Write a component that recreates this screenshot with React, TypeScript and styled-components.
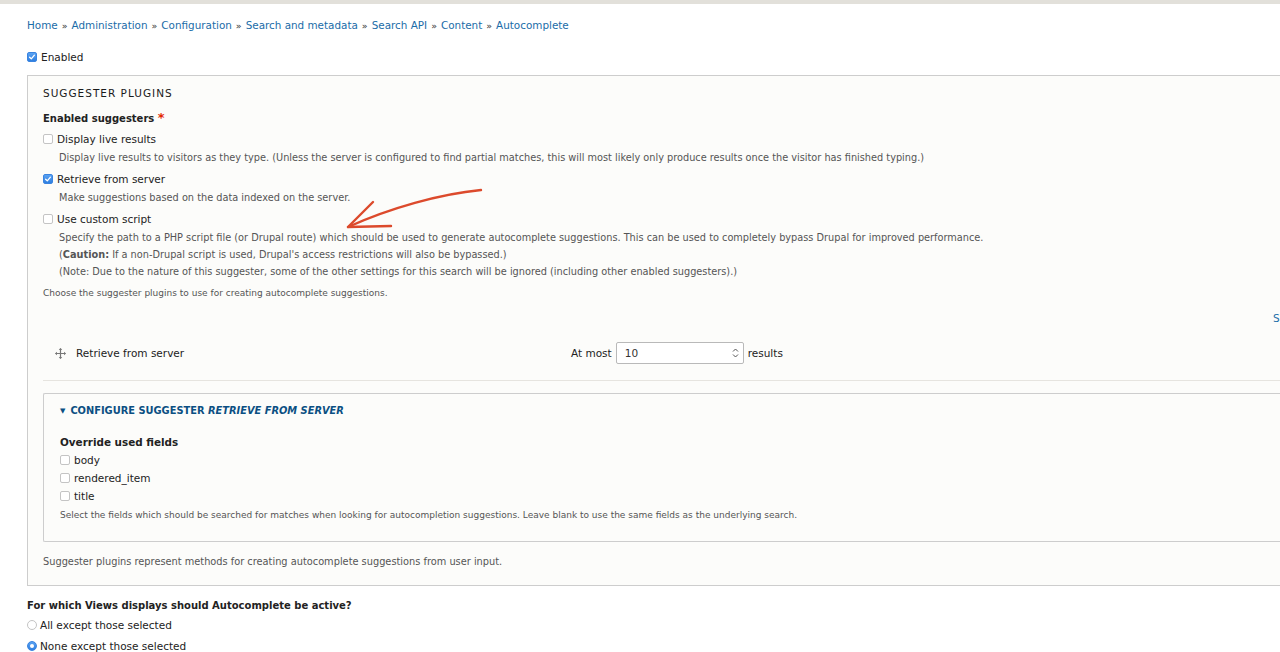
import styled, { createGlobalStyle } from "styled-components"

const GlobalStyle = createGlobalStyle`
    html, body {
        margin: 0;
        padding: 0;
        background: #fff;
        overflow: hidden;
    }
    body {
        font-family: "DejaVu Sans", "Liberation Sans", sans-serif;
        color: #222;
    }
`

const TopBar = styled.div`
    height: 4px;
    background: #e2e0da;
`

const Page = styled.div`
    position: relative;
    width: 1353px;
    padding: 13px 0 0 27px;
`

const Breadcrumb = styled.nav`
    font-size: 10.4px;
    line-height: 16px;
    color: #333;
    a {
        color: #1a6ca8;
        text-decoration: none;
    }
`

const Sep = styled.span`
    color: #333;
    margin: 0 4px;
    font-size: 9.5px;
`

const CheckRow = styled.label<{ $size?: string }>`
    display: flex;
    align-items: center;
    gap: 4px;
    font-size: ${props => props.$size || "10.5px"};
    line-height: 18px;
    color: #222;
`

const EnabledRow = styled(CheckRow)`
    margin-top: 14px;
`

const Box = styled.span<{ checked?: boolean; round?: boolean }>`
    display: inline-flex;
    align-items: center;
    justify-content: center;
    width: 10px;
    height: 10px;
    box-sizing: border-box;
    flex-shrink: 0;
    border-radius: ${props => props.round ? "50%" : "2px"};
    border: 1px solid ${props => props.checked ? "#3a84e0" : "#c4c4c4"};
    background: ${props => props.checked ? "linear-gradient(#5aa2f2, #2f7fe0)" : "#fff"};
`

const Dot = styled.span`
    width: 4px;
    height: 4px;
    border-radius: 50%;
    background: #fff;
`

const Fieldset = styled.section`
    margin-top: 9px;
    border: 1px solid #cdcdcd;
    border-right: none;
    background: #fcfcfa;
    padding: 9px 0 15px 15px;
`

const Legend = styled.h2`
    margin: 0;
    font-size: 10.5px;
    line-height: 16px;
    font-weight: normal;
    letter-spacing: 1px;
    text-transform: uppercase;
    color: #1a1a1a;
`

const GroupLabel = styled.div`
    margin-top: 9px;
    font-size: 10px;
    line-height: 16px;
    font-weight: bold;
    color: #222;
    span {
        color: #e32700;
        font-size: 13px;
    }
`

const Option = styled.div<{ $first?: boolean }>`
    margin-top: ${props => props.$first ? "3px" : "4px"};
`

const OptionDesc = styled.div`
    padding-left: 16px;
    font-size: 9.75px;
    line-height: 17px;
    color: #555;
    &:first-of-type {
        margin-top: 1px;
    }
`

const HelpText = styled.div<{ $top?: string; $size?: string }>`
    margin-top: ${props => props.$top || "5px"};
    font-size: ${props => props.$size || "9px"};
    line-height: 16px;
    color: #555;
`

const WeightLink = styled.div`
    margin-top: 9px;
    text-align: right;
    padding-right: 12px;
    font-size: 10.5px;
    line-height: 16px;
    color: #1a6ca8;
`

const DragRow = styled.div`
    display: grid;
    grid-template-columns: 516px auto;
    align-items: center;
    height: 54px;
    border-bottom: 1px solid #e6e4df;
    padding-left: 12px;
    font-size: 10.5px;
    color: #222;
`

const DragName = styled.div`
    display: flex;
    align-items: center;
    gap: 10px;
`

const Limit = styled.div`
    display: flex;
    align-items: center;
    gap: 4px;
`

const NumberBox = styled.div`
    display: flex;
    align-items: center;
    justify-content: space-between;
    box-sizing: border-box;
    width: 128px;
    height: 22px;
    padding: 0 4px 0 8px;
    border: 1px solid #b9b9b9;
    border-radius: 2px;
    background: #fff;
    font-size: 10.5px;
    color: #333;
`

const Details = styled.div`
    margin-top: 12px;
    border: 1px solid #cdcdcd;
    border-right: none;
    border-radius: 2px 0 0 2px;
    padding: 9px 0 18px 16px;
`

const Summary = styled.div`
    display: flex;
    align-items: center;
    font-size: 9.85px;
    line-height: 16px;
    font-weight: bold;
    text-transform: uppercase;
    color: #0b4f82;
    white-space: pre;
    em {
        font-style: italic;
    }
`

const Caret = styled.span`
    font-size: 7px;
    margin-right: 5px;
`

const SubLabel = styled.div`
    margin-top: 15px;
    font-size: 10.4px;
    line-height: 16px;
    font-weight: bold;
    color: #222;
`

const FieldList = styled.div`
    margin-top: 1px;
`

const Question = styled.div`
    margin-top: 12px;
    font-size: 10px;
    line-height: 16px;
    font-weight: bold;
    color: #222;
`

const RadioRow = styled(CheckRow)<{ $first?: boolean }>`
    line-height: 20px;
    gap: 3px;
    margin-top: 1px;
`

const Arrow = styled.svg`
    position: absolute;
    left: 340px;
    top: 176px;
    pointer-events: none;
`

const Check = ({ checked }: { checked?: boolean }) => (
    <Box checked={checked}>
        {checked && (
            <svg width="8" height="8" viewBox="0 0 8 8">
                <path d="M1.6 4.2 L3.3 5.8 L6.4 2.2" fill="none" stroke="#fff" strokeWidth="1.3" strokeLinecap="round" strokeLinejoin="round" />
            </svg>
        )}
    </Box>
)

const Radio = ({ checked }: { checked?: boolean }) => (
    <Box checked={checked} round>
        {checked && <Dot />}
    </Box>
)

const DragIcon = () => (
    <svg width="11" height="11" viewBox="0 0 11 11">
        <path d="M5.5 0.5 V10.5 M0.5 5.5 H10.5" stroke="#777" strokeWidth="1.2" />
        <path d="M5.5 0 L3.8 2 H7.2 Z M5.5 11 L3.8 9 H7.2 Z M0 5.5 L2 3.8 V7.2 Z M11 5.5 L9 3.8 V7.2 Z" fill="#777" />
    </svg>
)

const Spinner = () => (
    <svg width="7" height="12" viewBox="0 0 7 12">
        <path d="M1 4.5 L3.5 2 L6 4.5 M1 7.5 L3.5 10 L6 7.5" fill="none" stroke="#555" strokeWidth="1" />
    </svg>
)

const crumbs = ["Home", "Administration", "Configuration", "Search and metadata", "Search API", "Content", "Autocomplete"]

const suggesters = [
    {
        label: "Display live results",
        lines: ["Display live results to visitors as they type. (Unless the server is configured to find partial matches, this will most likely only produce results once the visitor has finished typing.)"],
    },
    {
        label: "Retrieve from server",
        checked: true,
        lines: ["Make suggestions based on the data indexed on the server."],
    },
    {
        label: "Use custom script",
        lines: [
            "Specify the path to a PHP script file (or Drupal route) which should be used to generate autocomplete suggestions. This can be used to completely bypass Drupal for improved performance.",
            "caution",
            "(Note: Due to the nature of this suggester, some of the other settings for this search will be ignored (including other enabled suggesters).)",
        ],
    },
]

const App = () => {
    return (
        <>
            <GlobalStyle />
            <TopBar />
            <Page>
                <Breadcrumb>
                    {crumbs.map((c, i) => (
                        <span key={c}>
                            {i > 0 && <Sep>»</Sep>}
                            <a href="#">{c}</a>
                        </span>
                    ))}
                </Breadcrumb>
                <EnabledRow>
                    <Check checked />
                    Enabled
                </EnabledRow>
                <Fieldset>
                    <Legend>Suggester plugins</Legend>
                    <GroupLabel>
                        Enabled suggesters <span>*</span>
                    </GroupLabel>
                    {suggesters.map((s, i) => (
                        <Option key={s.label} $first={i === 0}>
                            <CheckRow>
                                <Check checked={s.checked} />
                                {s.label}
                            </CheckRow>
                            {s.lines.map(line => (
                                <OptionDesc key={line}>
                                    {line === "caution" ? (
                                        <>
                                            (<b>Caution:</b> If a non-Drupal script is used, Drupal's access restrictions will also be bypassed.)
                                        </>
                                    ) : line}
                                </OptionDesc>
                            ))}
                        </Option>
                    ))}
                    <HelpText>Choose the suggester plugins to use for creating autocomplete suggestions.</HelpText>
                    <WeightLink>Show row weights</WeightLink>
                    <DragRow>
                        <DragName>
                            <DragIcon />
                            Retrieve from server
                        </DragName>
                        <Limit>
                            At most
                            <NumberBox>
                                10
                                <Spinner />
                            </NumberBox>
                            results
                        </Limit>
                    </DragRow>
                    <Details>
                        <Summary>
                            <Caret>▼</Caret>
                            Configure suggester <em>Retrieve from server</em>
                        </Summary>
                        <SubLabel>Override used fields</SubLabel>
                        <FieldList>
                            {["body", "rendered_item", "title"].map(f => (
                                <CheckRow key={f}>
                                    <Check />
                                    {f}
                                </CheckRow>
                            ))}
                        </FieldList>
                        <HelpText $top="2px">
                            Select the fields which should be searched for matches when looking for autocompletion suggestions. Leave blank to use the same fields as the underlying search.
                        </HelpText>
                    </Details>
                    <HelpText $top="12px" $size="9.8px">Suggester plugins represent methods for creating autocomplete suggestions from user input.</HelpText>
                </Fieldset>
                <Question>For which Views displays should Autocomplete be active?</Question>
                <RadioRow>
                    <Radio />
                    All except those selected
                </RadioRow>
                <RadioRow>
                    <Radio checked />
                    None except those selected
                </RadioRow>
                <Arrow width="150" height="52" viewBox="0 0 150 52">
                    <path d="M141 10 C 100 14, 50 28, 8 47" fill="none" stroke="#dc4a2c" strokeWidth="2.4" strokeLinecap="round" />
                    <path d="M8 47 L33 22 M8 47 L51 46" fill="none" stroke="#dc4a2c" strokeWidth="2.4" strokeLinecap="round" />
                </Arrow>
            </Page>
        </>
    );
};

export default App;
